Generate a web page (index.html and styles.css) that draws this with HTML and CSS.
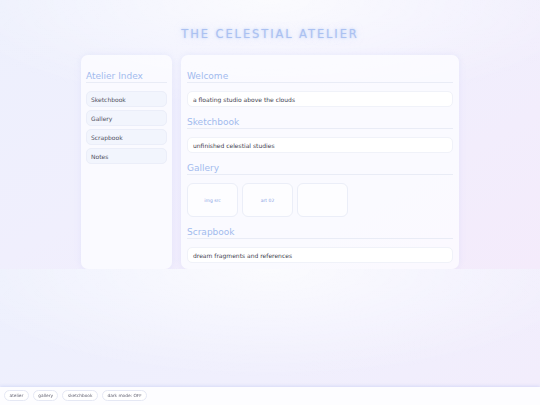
FILE: index.html
```html
<!DOCTYPE html>
<html lang="en">
<head>
<meta charset="utf-8">
<title>The Celestial Atelier</title>
<link rel="stylesheet" href="styles.css">
</head>
<body>
<header class="masthead">
  <h1 class="title">THE CELESTIAL ATELIER</h1>
</header>
<div class="layout">
  <aside class="card sidebar">
    <h2 class="heading">Atelier Index</h2>
    <nav class="nav">
      <a class="nav-item">Sketchbook</a>
      <a class="nav-item">Gallery</a>
      <a class="nav-item">Scrapbook</a>
      <a class="nav-item">Notes</a>
    </nav>
  </aside>
  <main class="card content">
    <section class="section">
      <h2 class="heading">Welcome</h2>
      <div class="note">a floating studio above the clouds</div>
    </section>
    <section class="section">
      <h2 class="heading">Sketchbook</h2>
      <div class="note">unfinished celestial studies</div>
    </section>
    <section class="section">
      <h2 class="heading">Gallery</h2>
      <div class="gallery">
        <div class="tile">img src</div>
        <div class="tile">art 02</div>
        <div class="tile"></div>
      </div>
    </section>
    <section class="section">
      <h2 class="heading">Scrapbook</h2>
      <div class="note">dream fragments and references</div>
    </section>
  </main>
</div>
<footer class="dock">
  <button class="pill">atelier</button>
  <button class="pill">gallery</button>
  <button class="pill">sketchbook</button>
  <button class="pill">dark mode: OFF</button>
</footer>
</body>
</html>
```
FILE: styles.css
```css
html {
  background:
    radial-gradient(ellipse 60% 40% at 50% 0%, rgba(255,255,255,0.75) 0%, rgba(255,255,255,0) 100%),
    linear-gradient(150deg, #edf0fd 0%, #f0effd 45%, #f4ebfb 100%);
}

body {
  margin: 0;
  font-family: "DejaVu Sans", Verdana, sans-serif;
  color: #4a4a58;
}

.masthead {
  padding-top: 27px;
  margin-bottom: 14px;
  text-align: center;
}

.title {
  margin: 0;
  font-size: 11.5px;
  line-height: 14px;
  font-weight: normal;
  letter-spacing: 1.9px;
  color: #abc1f1;
  text-shadow: 0 0 2px rgba(170, 195, 245, 0.7), 0 0 7px rgba(185, 205, 250, 0.6);
}

.layout {
  width: 378px;
  margin: 0 auto;
  display: grid;
  grid-template-columns: 91px 278px;
  gap: 9px;
}

.card {
  background: rgba(251, 251, 255, 0.85);
  border-radius: 7px;
  box-shadow: 0 0 6px rgba(180, 190, 240, 0.22);
  padding: 12px 6px 6px;
}

.sidebar {
  padding-left: 5px;
  padding-right: 5px;
}

.heading {
  margin: 0 0 8px;
  padding-top: 3px;
  border-bottom: 1px solid #e9ecf6;
  font-size: 9px;
  line-height: 12px;
  font-weight: normal;
  color: #a2baee;
}

.nav {
  display: flex;
  flex-direction: column;
  gap: 3px;
}

.nav-item {
  display: flex;
  align-items: center;
  height: 16px;
  box-sizing: border-box;
  padding-left: 4px;
  background: #f2f5fd;
  border: 1px solid #ebeef9;
  border-radius: 5px;
  font-size: 6px;
  color: #50505e;
}

.content {
  display: flex;
  flex-direction: column;
  gap: 6px;
}

.note {
  display: flex;
  align-items: center;
  height: 16px;
  box-sizing: border-box;
  padding-left: 5px;
  background: #ffffff;
  border: 1px solid #f0f2f9;
  border-radius: 5px;
  font-size: 6px;
  color: #42424f;
}

.gallery {
  display: flex;
  gap: 4px;
}

.tile {
  width: 51px;
  height: 34px;
  box-sizing: border-box;
  display: flex;
  align-items: center;
  justify-content: center;
  background: #fdfdff;
  border: 1px solid #ebeef8;
  border-radius: 6px;
  font-size: 4.5px;
  color: #8aa3e4;
}

.dock {
  position: fixed;
  left: 0;
  right: 0;
  bottom: 0;
  height: 18px;
  box-sizing: border-box;
  padding: 3px 4px 0;
  display: flex;
  gap: 4px;
  background: #fdfdff;
  box-shadow: 0 -1px 3px rgba(190, 200, 245, 0.5);
}

.pill {
  height: 11px;
  margin: 0;
  padding: 0 4.5px;
  background: #ffffff;
  border: 1px solid #e5e8f4;
  border-radius: 6px;
  font-family: "DejaVu Sans", Verdana, sans-serif;
  font-size: 4.3px;
  line-height: 9px;
  color: #5c5c6c;
}
```
